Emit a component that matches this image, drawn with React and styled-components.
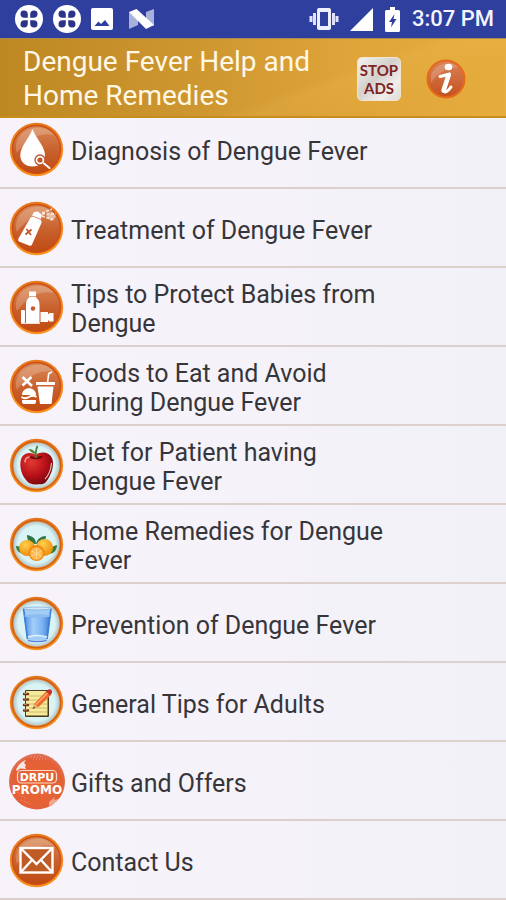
import styled, { createGlobalStyle } from "styled-components";

const GlobalStyle = createGlobalStyle`
    * {
        box-sizing: border-box;
    }
    body {
        margin: 0;
        font-family: Roboto, "Liberation Sans", sans-serif;
        background: #f5f2f9;
    }
`;

const Page = styled.div`
    min-height: 100vh;
    overflow: hidden;
    background: linear-gradient(90deg, #f8f3fb 0%, #f5f2fa 50%, #f2f1f7 100%);
`;

const StatusBar = styled.div`
    display: flex;
    justify-content: space-between;
    align-items: center;
    height: 38px;
    padding: 0 12px 0 15px;
    background: #2f3f9e;
    color: #fff;
`;

const StatusGroup = styled.div`
    display: flex;
    align-items: center;
    gap: ${(props) => props.$gap};
`;

const Clock = styled.span`
    font-size: 22px;
    font-weight: 500;
    line-height: 38px;
    color: #f4f5ff;
`;

const Header = styled.header`
    position: relative;
    z-index: 1;
    display: flex;
    align-items: center;
    height: 80px;
    padding: 2px 40px 0 23px;
    background:
        linear-gradient(160deg, transparent 60%, rgba(255, 205, 110, 0.1) 64%, transparent 80%),
        linear-gradient(90deg, #bd8722 0%, #cf9730 40%, #dfa53a 70%, #e6ac3d 100%);
    border-top: 1px solid #a98a52;
    border-bottom: 2px solid #c98d1d;
`;

const Title = styled.h1`
    flex: 1;
    margin: 0;
    font-size: 28px;
    font-weight: 400;
    line-height: 34px;
    color: #fff8e6;
`;

const HeaderActions = styled.div`
    display: flex;
    align-items: center;
    gap: 25px;
`;

const StopAds = styled.button`
    width: 44px;
    height: 44px;
    padding: 0;
    border: 1px solid #efe5d0;
    border-radius: 5px;
    background: linear-gradient(135deg, #f4f2ef 0%, #d4d1cd 45%, #f1efec 75%, #dedad4 100%);
    font-family: Lato, sans-serif;
    font-size: 15px;
    font-weight: 700;
    line-height: 18px;
    color: #7e2523;
`;

const InfoButton = styled.button`
    display: flex;
    padding: 0;
    border: 0;
    background: none;
`;

// the list is scrolled a little, so its first row starts under the header
const List = styled.ul`
    margin: -8px 0 0;
    padding: 0;
    list-style: none;
`;

const Row = styled.li`
    border-bottom: 2px solid #dcd0cc;
`;

const RowLink = styled.a`
    display: flex;
    align-items: center;
    gap: 7px;
    min-height: 77px;
    padding: 2px 9px 0;
    color: #36363a;
    text-decoration: none;
`;

const Label = styled.span`
    max-width: 65%;
    padding-top: 3px;
    font-size: 25px;
    line-height: 29px;
`;

const Icon = styled.svg`
    flex: none;
    display: block;
    overflow: visible;
`;

const Badge = ({ light, children }) => (
    <Icon width="55" height="55" viewBox="0 0 55 55" aria-hidden="true">
        <defs>
            <linearGradient id="copper" x1="0" y1="0" x2="0" y2="1">
                <stop offset="0" stopColor="#d98a58" />
                <stop offset="0.5" stopColor="#c9622f" />
                <stop offset="1" stopColor="#c04a12" />
            </linearGradient>
            <linearGradient id="ring" x1="0" y1="0" x2="0" y2="1">
                <stop offset="0" stopColor="#e8781c" />
                <stop offset="1" stopColor="#fb931c" />
            </linearGradient>
            <radialGradient id="ice">
                <stop offset="0.8" stopColor="#daf4f6" />
                <stop offset="1" stopColor="#b3c6c9" />
            </radialGradient>
        </defs>
        <circle cx="27.5" cy="27.5" r="26.7" fill="url(#ring)" />
        {light ? (
            <>
                <circle cx="27.5" cy="27.5" r="24.3" fill="none" stroke="#d0611a" strokeWidth="1.6" />
                <circle cx="27.5" cy="27.5" r="23" fill="url(#ice)" />
            </>
        ) : (
            <>
                <circle cx="27.5" cy="27.5" r="24" fill="url(#copper)" stroke="#cc4f14" strokeWidth="1.4" />
                <path d="M9 17C15 5 35 1 45 13C32 10 18 17 8 31C6 26 7 21 9 17Z" fill="#fff" opacity="0.2" />
            </>
        )}
        {children}
    </Icon>
);

const Drop = () => (
    <Badge>
        <path d="M23.5 7C27 17 36 24 36 33.500C36 40 30.500 44.500 23.500 44.500S11.300 40 11.300 33.500C11.300 24 20 17 23.500 7Z" fill="#fff" />
        <circle cx="31" cy="38" r="5" fill="#fff" stroke="#b9532b" strokeWidth="1.300" />
        <circle cx="31" cy="38" r="2.600" fill="#c2562a" />
        <path d="M35 41.500L40.500 46" stroke="#fff" strokeWidth="2" strokeLinecap="round" />
    </Badge>
);

const Spray = () => (
    <Badge>
        <path d="M21 17.500Q22 15 25 16L31 18.500Q33.500 20 32 23L23 43.500Q22 45.500 20 44.500L10 40.500Q8.500 39.500 9.500 37.500Z" fill="#fff" />
        <path d="M23 14.500L32 18L33 14L29 10.500L25 11Z" fill="#fff" />
        <path d="M17.500 28L22 34M22.500 28.500L16.500 33.500" stroke="#c4572c" strokeWidth="1.800" />
        <path d="M33 12L43 8M33 13L47 13M33 15L45 19" stroke="#f9e5da" strokeWidth="1.600" strokeDasharray="3 1.500" />
        <path d="M37 14L44 11L47 16L42 20Z" fill="#fff" opacity="0.500" />
    </Badge>
);

const Bottles = () => (
    <Badge>
        <path d="M20 11.500H27V17.500C30 20 30.500 22 30.500 25V43H17V25C17 22 17.500 20 20 17.500Z" fill="#fff" />
        <path d="M19.500 16.500H27.500" stroke="#d78c66" strokeWidth="0.800" />
        <rect x="12" y="30" width="4" height="13" rx="1" fill="#fff" />
        <path d="M31.500 32H39V34H40V33H44.500V41.500H40V40.500H39V42H31.500Z" fill="#fff" />
        <circle cx="24" cy="28.500" r="2.200" fill="#c65a2c" />
        <path d="M12 43.300H31" stroke="#fff" strokeWidth="1" />
    </Badge>
);

const FastFood = () => (
    <Badge>
        <path d="M13.500 18L23 27M22.500 18L13.500 26.500" stroke="#fff" strokeWidth="2.600" />
        <path d="M13 36C13 27 27 27 27 36Z" fill="#fff" />
        <path d="M12.500 38Q16 40.500 20 38T27.500 38" fill="none" stroke="#fff" strokeWidth="1.800" />
        <path d="M13 41H27V43Q27 45 25 45H15Q13 45 13 43Z" fill="#fff" />
        <path d="M27 23H46V26H27ZM28.500 27.500H44.500L42.500 45H31Z" fill="#fff" />
        <path d="M38.500 24L39.700 14.500L43 13" fill="none" stroke="#fff" strokeWidth="1.600" />
    </Badge>
);

const Apple = () => (
    <Badge light>
        <defs>
            <radialGradient id="apple" cx="0.350" cy="0.300" r="0.750">
                <stop offset="0" stopColor="#e13a31" />
                <stop offset="0.550" stopColor="#bb1119" />
                <stop offset="1" stopColor="#74070e" />
            </radialGradient>
        </defs>
        <path d="M27 17C32 13 40 14 43 20C46 27 42 38 37 44C34 47 31 46 28 46.500C24 47 20 46 17 42C11 35 10 24 13 19C16 14 23 14 27 17Z" fill="url(#apple)" />
        <path d="M20 19C23 17 25 19 27 20C29 18 32 17 34 19C31 22 23 22 20 19Z" fill="#6c0b10" />
        <path d="M27 20C26.500 15 27 11 28.500 8" fill="none" stroke="#4b7a2d" strokeWidth="1.700" />
        <path d="M26 16C23 15 21 13 19.500 11C23 11 26 12.500 26.500 16Z" fill="#55803a" />
        <path d="M16 24C16 21 18 19.500 20 19" fill="none" stroke="#f29a90" strokeWidth="1.500" strokeLinecap="round" />
        <path d="M42.500 25C42 31 40 37 36 41" fill="none" stroke="#eeb4ad" strokeWidth="1.200" />
    </Badge>
);

const Oranges = () => (
    <Badge light>
        <defs>
            <radialGradient id="orange" cx="0.400" cy="0.300" r="0.700">
                <stop offset="0" stopColor="#ffd04d" />
                <stop offset="1" stopColor="#ee8d0b" />
            </radialGradient>
        </defs>
        <path d="M27 27C20 27 18 23 18 18C24 19 27 22 27 27C28 22 32 19 37 19C37 24 33 27 27 27Z" fill="#2f7640" />
        <path d="M7 29C12 29 16 32 17 37C11 37 7 34 7 29ZM48 28C43 29 39 33 39 37C45 37 48 33 48 28Z" fill="#397d37" />
        <circle cx="18" cy="31" r="8" fill="url(#orange)" />
        <circle cx="35.500" cy="30.500" r="8.500" fill="url(#orange)" />
        <circle cx="27.500" cy="36" r="8" fill="#f08a16" />
        <circle cx="27.500" cy="36.500" r="6.300" fill="#ffb84d" />
        <path d="M27.500 31V42M22.500 34L32.500 39M32.500 34L22.500 39" stroke="#ffd995" strokeWidth="0.900" />
    </Badge>
);

const Glass = () => (
    <Badge light>
        <defs>
            <linearGradient id="water">
                <stop offset="0" stopColor="#4d8de3" />
                <stop offset="0.350" stopColor="#a4cff8" />
                <stop offset="0.700" stopColor="#79b2f2" />
                <stop offset="1" stopColor="#3a78d4" />
            </linearGradient>
        </defs>
        <path d="M14 12H42.500L38.500 43Q38 45.500 35.500 45.500H21Q18.500 45.500 18 43Z" fill="#a3cdf4" />
        <path d="M15 20Q28 17 41.500 20L38.700 40H17.800Z" fill="url(#water)" />
        <path d="M14.500 12.500L18.500 43M42 12.500L38 43" stroke="#3f7fd4" strokeWidth="1.700" />
        <ellipse cx="28.300" cy="20" rx="13" ry="1.700" fill="#8dbcf0" />
        <ellipse cx="28.300" cy="12.500" rx="14" ry="1.500" fill="#cfe7f8" stroke="#7aa8dc" strokeWidth="0.700" />
        <path d="M19 41Q28 38 38 41" fill="none" stroke="#e4f2ff" strokeWidth="1.500" />
        <path d="M19 44.500Q28 47 37.500 44.500" fill="none" stroke="#5170df" strokeWidth="1.200" />
    </Badge>
);

const Notebook = () => (
    <Badge light>
        <rect x="16" y="15" width="24" height="27" rx="1" fill="#4a3a20" />
        <rect x="17" y="16" width="21.500" height="24.500" fill="#f6ea9b" />
        <path d="M20 21H38M20 25H38M20 29H38M20 33H38M20 37H38" stroke="#cbb968" strokeWidth="0.900" />
        <path d="M15 19H19M15 24.500H19M15 30H19M15 35.500H19" stroke="#71351c" strokeWidth="2.400" strokeLinecap="round" />
        <path d="M15 18.400H18M15 23.900H18M15 29.400H18M15 34.900H18" stroke="#e8a06b" strokeWidth="0.700" />
        <path d="M25.500 28.500L37.500 16L42 20L29.500 32L23.500 34Z" fill="#ee6b2d" />
        <path d="M27 29.500L39 17.500" stroke="#ffad6e" strokeWidth="1.200" />
        <path d="M37 16.500L39.500 14.500Q43.500 13.500 43 18L41 20.500Z" fill="#c5352b" />
        <path d="M25.500 29L29 32L23.500 34Z" fill="#e8b779" />
        <path d="M25 31.500L26 32.700L23.500 34Z" fill="#3d2c20" />
    </Badge>
);

const Promo = () => (
    <Icon width="55" height="55" viewBox="0 0 55 55" aria-hidden="true">
        <defs>
            <radialGradient id="promo" cx="0.500" cy="0.550" r="0.550">
                <stop offset="0" stopColor="#e9652e" />
                <stop offset="0.850" stopColor="#e36038" />
                <stop offset="1" stopColor="#dc7a62" />
            </radialGradient>
        </defs>
        <circle cx="28" cy="27.500" r="28" fill="url(#promo)" />
        <path d="M7 16C9 11 12 8 17 6L15 9L17 11L16 13L17 15L11 14.500L8 17Z" fill="#fff" opacity="0.850" />
        <path d="M40 48L46 43L45 46L50 45C48 48 44 51 40 52Z" fill="#fff" opacity="0.450" />
        <path d="M22 3H34M24 5H37M8 38L17 45M12 46L21 50" stroke="#fff" strokeWidth="0.800" strokeDasharray="1 2" opacity="0.500" />
        <rect x="8.500" y="16.500" width="39" height="12.500" rx="4" fill="none" stroke="#fbd9ca" strokeWidth="1.200" />
        <text x="28" y="27" textAnchor="middle" fontFamily="DejaVu Sans" fontSize="11" fontWeight="700" fill="#fff">
            DRPU
        </text>
        <text x="28" y="40" textAnchor="middle" fontFamily="DejaVu Sans" fontSize="12" fontWeight="700" fill="#fff">
            PROMO
        </text>
    </Icon>
);

const Mail = () => (
    <Badge>
        <rect x="11.500" y="15" width="32" height="24.500" fill="#bf5b24" stroke="#fff" strokeWidth="2.400" />
        <path d="M12 15.500L27.500 31L43 15.500M12 39L23 27M43 39L32 27" fill="none" stroke="#fff" strokeWidth="2.400" />
    </Badge>
);

const Clover = () => (
    <Icon width="28" height="28" viewBox="0 0 28 28" aria-hidden="true">
        <circle cx="14" cy="14" r="14" fill="#fff" />
        <g fill="#2c3488">
            {[0, 90, 180, 270].map((turn) => (
                <path key={turn} transform={`rotate(${turn} 14 14)`} d="M12.800 12.800H9.500Q5.500 12.800 5.500 9T9 5.500Q12.800 5.500 12.800 9.500Z" />
            ))}
        </g>
    </Icon>
);

const Photo = () => (
    <Icon width="22" height="22" viewBox="0 0 22 22" aria-hidden="true">
        <rect width="22" height="22" rx="2" fill="#fff" />
        <path d="M3.500 18L7.500 13.500L10 16L14 12L18.500 18Z" fill="#2f3f9e" />
    </Icon>
);

const Nougat = () => (
    <Icon width="26" height="20" viewBox="0 0 26 20" aria-hidden="true">
        <path d="M0 3H9V16L0 20ZM25 0V17L17 14V3Z" fill="#a9b0da" />
        <path d="M0 3L7.500 0L25 16L17 20Z" fill="#fff" />
    </Icon>
);

const Vibrate = () => (
    <Icon width="28" height="22" viewBox="0 0 28 22" aria-hidden="true">
        <rect x="7" y="0" width="14" height="22" rx="2" fill="#eef0ff" />
        <rect x="10" y="4" width="8" height="14" fill="#2f3f9e" />
        <path d="M1 8V14M4.500 5V17M23.500 5V17M27 8V14" stroke="#dfe2fa" strokeWidth="3" />
    </Icon>
);

const Signal = () => (
    <Icon width="23" height="23" viewBox="0 0 23 23" aria-hidden="true">
        <path d="M23 0V23H0Z" fill="#fff" />
    </Icon>
);

const Battery = () => (
    <Icon width="15" height="25" viewBox="0 0 15 25" aria-hidden="true">
        <path d="M5 0H10V3H13.500Q15 3 15 4.500V23.500Q15 25 13.500 25H1.500Q0 25 0 23.500V4.500Q0 3 1.500 3H5Z" fill="#fff" />
        <path d="M9.500 7L4 15H7L6 20.500L11.500 12H8.500Z" fill="#2f3f9e" />
    </Icon>
);

const Info = () => (
    <Icon width="40" height="40" viewBox="0 0 40 40" aria-hidden="true">
        <defs>
            <linearGradient id="info" x1="0" y1="0" x2="0" y2="1">
                <stop offset="0" stopColor="#d98358" />
                <stop offset="1" stopColor="#c5501c" />
            </linearGradient>
        </defs>
        <circle cx="20" cy="20" r="18.500" fill="url(#info)" stroke="#e66a1c" strokeWidth="2" />
        <path d="M5 16C8 5 24 1 32 8C22 9 12 13 5 24Z" fill="#fff" opacity="0.180" />
        <ellipse cx="22.500" cy="8" rx="3.800" ry="3.200" fill="#fff" />
        <path d="M14 17.500Q19 16.500 23.500 15L18.500 30Q17.500 34 20.500 32.500Q23 31 25 28" fill="none" stroke="#fff" strokeWidth="3" strokeLinejoin="round" strokeLinecap="round" />
        <path d="M22.500 16.500L17.500 31.500" stroke="#fff" strokeWidth="4.500" strokeLinecap="round" />
    </Icon>
);

const topics = [
    { label: "Diagnosis of Dengue Fever", Picture: Drop },
    { label: "Treatment of Dengue Fever", Picture: Spray },
    { label: "Tips to Protect Babies from Dengue", Picture: Bottles },
    { label: "Foods to Eat and Avoid During Dengue Fever", Picture: FastFood },
    { label: "Diet for Patient having Dengue Fever", Picture: Apple },
    { label: "Home Remedies for Dengue Fever", Picture: Oranges },
    { label: "Prevention of Dengue Fever", Picture: Glass },
    { label: "General Tips for Adults", Picture: Notebook },
    { label: "Gifts and Offers", Picture: Promo },
    { label: "Contact Us", Picture: Mail },
];

const App = () => {
    return (
        <>
            <GlobalStyle />
            <Page>
                <StatusBar>
                    <StatusGroup $gap="10px">
                        <Clover />
                        <Clover />
                        <StatusGroup $gap="16px">
                            <Photo />
                            <Nougat />
                        </StatusGroup>
                    </StatusGroup>
                    <StatusGroup $gap="12px">
                        <Vibrate />
                        <Signal />
                        <Battery />
                        <Clock>3:07 PM</Clock>
                    </StatusGroup>
                </StatusBar>
                <Header>
                    <Title>
                        Dengue Fever Help and
                        <br />
                        Home Remedies
                    </Title>
                    <HeaderActions>
                        <StopAds type="button">
                            STOP
                            <br />
                            ADS
                        </StopAds>
                        <InfoButton type="button" aria-label="Info">
                            <Info />
                        </InfoButton>
                    </HeaderActions>
                </Header>
                <List>
                    {topics.map(({ label, Picture }) => (
                        <Row key={label}>
                            <RowLink href="#">
                                <Picture />
                                <Label>{label}</Label>
                            </RowLink>
                        </Row>
                    ))}
                </List>
            </Page>
        </>
    );
};

export default App;
